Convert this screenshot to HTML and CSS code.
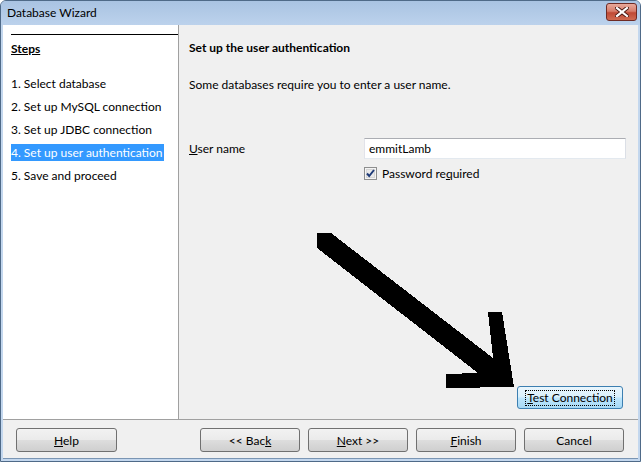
FILE: index.html
```html
<!DOCTYPE html>
<html lang="en">
<head>
    <meta charset="UTF-8">
    <title>Database Wizard</title>
    <link rel="stylesheet" href="styles.css">
</head>
<body>
    <div class="window">
        <!-- Title bar -->
        <div class="titlebar">
            <span class="title">Database Wizard</span>
            <div class="close-btn">
                <svg width="14" height="10" viewBox="0 0 14 10">
                    <path d="M2 1 L12 9 M12 1 L2 9" stroke="#4a1a14" stroke-width="4" stroke-linecap="square"/>
                    <path d="M2 1 L12 9 M12 1 L2 9" stroke="#ffffff" stroke-width="2.2" stroke-linecap="square"/>
                </svg>
            </div>
        </div>

        <div class="client">
            <div class="main">
                <!-- Steps roadmap -->
                <div class="steps">
                    <div class="steps-head"><u>Steps</u></div>
                    <ul class="step-list">
                        <li><span>1. Select database</span></li>
                        <li><span>2. Set up MySQL connection</span></li>
                        <li><span>3. Set up JDBC connection</span></li>
                        <li><span class="current">4. Set up user authentication</span></li>
                        <li><span>5. Save and proceed</span></li>
                    </ul>
                </div>

                <!-- Page content -->
                <div class="page">
                    <h2 class="page-title">Set up the user authentication</h2>
                    <p class="page-desc">Some databases require you to enter a user name.</p>

                    <div class="form-row">
                        <label class="field-label"><u>U</u>ser name</label>
                        <div class="field">
                            <div class="textbox">emmitLamb</div>
                            <div class="check-row">
                                <svg class="checkbox" width="13" height="13" viewBox="0 0 13 13">
                                    <rect x="0.5" y="0.5" width="12" height="12" fill="#f4f4f4" stroke="#8e8f8f"/>
                                    <rect x="2.5" y="2.5" width="8" height="8" fill="#e9e9e9" stroke="#d6d6d6"/>
                                    <path d="M3 6.5 L5.2 9 L10 3" fill="none" stroke="#1f3b78" stroke-width="2"/>
                                </svg>
                                <span>Password re<u>q</u>uired</span>
                            </div>
                        </div>
                    </div>

                    <div class="test-wrap">
                        <button class="btn btn-focus"><span class="focus-rect"><u>T</u>est Connection</span></button>
                    </div>

                    <!-- annotation arrow drawn over the page -->
                    <svg class="arrow" width="458" height="394" viewBox="0 0 458 394" shape-rendering="crispEdges">
                        <polygon points="138,208 152,208 314,333 309,287 323,287 335,362 267,363 267,349 299,348 138,223" fill="#000"/>
                    </svg>
                </div>
            </div>

            <!-- Bottom buttons -->
            <div class="footer">
                <button class="btn btn-help"><u>H</u>elp</button>
                <div class="nav-buttons">
                    <button class="btn">&lt;&lt; Bac<u>k</u></button>
                    <button class="btn"><u>N</u>ext &gt;&gt;</button>
                    <button class="btn"><u>F</u>inish</button>
                    <button class="btn">Cancel</button>
                </div>
            </div>
        </div>
    </div>
</body>
</html>
```

FILE: styles.css
```css
body {
    margin: 0;
    background: #ffffff;
    font-family: 'Lato', 'Liberation Sans', sans-serif;
    font-size: 12px;
    color: #000;
}

.window {
    width: 641px;
    height: 462px;
    box-sizing: border-box;
    border: 1px solid #4f6a88;
    border-radius: 6px 6px 0 0;
    background: #c3d7ee;
    display: flex;
    flex-direction: column;
    overflow: hidden;
}

.titlebar {
    height: 24px;
    flex: none;
    display: flex;
    align-items: center;
    justify-content: space-between;
    padding: 0 3px 0 6px;
    background: linear-gradient(to bottom, #a9c3e2, #bcd2ec);
}

.title {
    font-size: 12px;
    color: #000;
    padding-bottom: 1px;
}

.close-btn {
    width: 29px;
    height: 16px;
    margin-top: -3px;
    border: 1px solid #6f2b24;
    border-radius: 3px;
    background: linear-gradient(to bottom, #e9a99b 0%, #d77d6b 45%, #c04a35 55%, #cf6b52 100%);
    display: flex;
    align-items: center;
    justify-content: center;
}

.client {
    flex: 1;
    margin: 0 2px 2px 2px;
    background: #f0f0f0;
    display: flex;
    flex-direction: column;
    border-bottom: 1px solid #7a95b3;
}

.main {
    height: 394px;
    display: flex;
    border-bottom: 1px solid #a0a0a0;
}

/* left roadmap */
.steps {
    width: 176px;
    background: #ffffff;
    border-right: 1px solid #a0a0a0;
    padding-left: 8px;
    box-sizing: border-box;
}

.steps-head {
    margin-top: 9px;
    border-top: 1px solid #000;
    padding-top: 6px;
    font-weight: 700;
    line-height: 16px;
}

.step-list {
    list-style: none;
    margin: 18px 0 0 0;
    padding: 0;
}

.step-list li {
    height: 23px;
    line-height: 17px;
}

.step-list .current {
    display: inline-block;
    background: #3399ff;
    color: #fff;
    padding-right: 2px;
}

/* right page */
.page {
    flex: 1;
    position: relative;
    padding: 0 12px 0 10px;
    display: flex;
    flex-direction: column;
}

.page-title {
    font-size: 12px;
    font-weight: 700;
    margin: 15px 0 0 0;
    line-height: 16px;
}

.page-desc {
    margin: 21px 0 0 0;
    line-height: 16px;
}

.form-row {
    display: flex;
    margin-top: 45px;
}

.field-label {
    width: 175px;
    line-height: 20px;
    padding-top: 1px;
}

.field {
    flex: 1;
}

.textbox {
    height: 21px;
    box-sizing: border-box;
    border: 1px solid #abadb3;
    border-color: #abadb3 #dbdfe6 #e3e9ef #e2e3ea;
    background: #fff;
    padding: 0 4px;
    line-height: 19px;
}

.check-row {
    display: flex;
    align-items: center;
    gap: 5px;
    margin-top: 7px;
    height: 14px;
}

.checkbox {
    display: block;
}

.test-wrap {
    margin-top: auto;
    margin-bottom: 10px;
    display: flex;
    justify-content: flex-end;
    margin-right: 3px;
}

.arrow {
    position: absolute;
    left: 0;
    top: 0;
    pointer-events: none;
}

/* buttons */
.btn {
    font-family: inherit;
    font-size: 12px;
    color: #000;
    width: 100px;
    height: 24px;
    box-sizing: border-box;
    border: 1px solid #707070;
    border-radius: 3px;
    background: linear-gradient(to bottom, #f2f2f2 0%, #ebebeb 48%, #dddddd 52%, #cfcfcf 100%);
    padding: 0;
    margin: 0;
}

.btn-help {
    width: 101px;
}

.btn-focus {
    width: 106px;
    height: 23px;
    border-color: #3c7fb1;
    background: linear-gradient(to bottom, #eaf6fd 0%, #d9f0fc 48%, #bee6fd 52%, #a7d9f5 100%);
}

.focus-rect {
    display: inline-block;
    border: 1px dotted #000;
    padding: 0 1px;
    line-height: 14px;
}

.footer {
    flex: 1;
    display: flex;
    justify-content: space-between;
    padding: 8px 14px 0 13px;
}

.nav-buttons {
    display: flex;
    gap: 8px;
}
```
